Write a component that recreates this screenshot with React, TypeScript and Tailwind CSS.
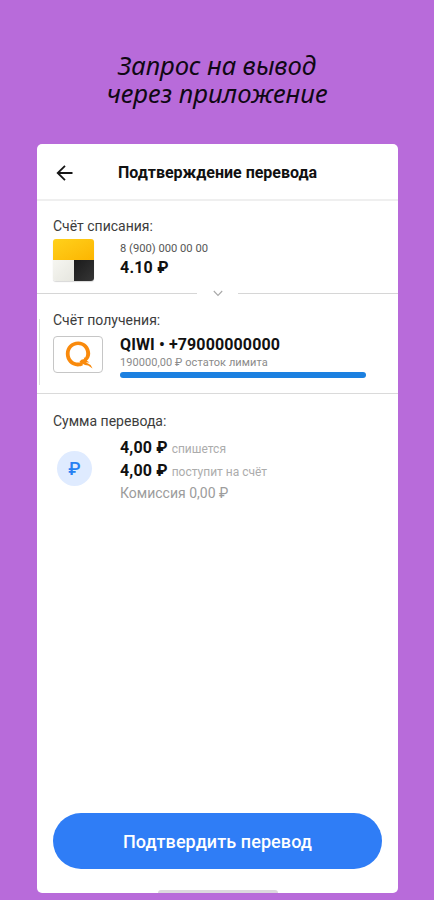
import type { ReactNode } from "react";

const ACCOUNT = {
  phone: "8 (900) 000 00 00",
  balance: "4.10 ₽",
};

const TARGET = {
  title: "QIWI • +79000000000",
  limit: "190000,00 ₽ остаток лимита",
};

const AMOUNTS = [
  { value: "4,00 ₽", note: "спишется" },
  { value: "4,00 ₽", note: "поступит на счёт" },
];

function Label({ children }: { children: ReactNode }) {
  return <p className="text-[14px] leading-4 text-[#3c3c3c] whitespace-nowrap">{children}</p>;
}

function BackIcon() {
  return (
    <svg width="18" height="18" viewBox="0 0 18 18" fill="none" stroke="#161616" strokeWidth="1.8">
      <path d="M16.500 9H2.200M9 1.800L1.700 9L9 16.200" />
    </svg>
  );
}

function YooLogo() {
  return (
    <div className="w-[41px] h-[42px] rounded-[3px] overflow-hidden grid grid-cols-2 grid-rows-2 shadow-[0_1px_1px_#d8d8d8]">
      <div className="col-span-2 bg-linear-to-br from-[#ffd11a] to-[#fcb500]" />
      <div className="bg-linear-to-br from-[#f6f6f1] to-[#e6e6df]" />
      <div className="bg-linear-to-br from-[#1b1b1b] to-[#363636]" />
    </div>
  );
}

function QiwiLogo() {
  return (
    <div className="w-[50px] h-[37px] rounded-[4px] border border-[#c6c6c6]">
      {/* ring with a broken lower right edge and a ragged tail */}
      <svg width="48" height="35" viewBox="0 0 48 35" fill="#f98a0c">
        <path
          fillRule="evenodd"
          d="M24.200 4.500C17.200 4.500 11.800 9.900 11.800 16.800C11.800 23.800 17 29.400 23.800 29.400C25.800 29.400 27.500 29 28.900 28.200L28.600 26.800L31 27.900L34.200 28.600L38.600 31.600L36.600 28L31.800 25.200L35.600 25.600L32.800 23.800C35 21.900 36.200 19.500 36.200 16.600C36.200 9.900 31 4.500 24.200 4.500ZM24 8.100C28.600 8.100 31.900 11.600 32.200 16C32.300 17.700 31.900 19.200 31.200 20.500L29.700 20.700L30.200 22.100L27.300 22.800L25.400 24.800L26.600 25.200C25.800 25.400 25 25.600 24.200 25.600C19.200 25.600 15.600 21.800 15.600 16.700C15.600 11.700 19.200 8.100 24 8.100Z"
        />
      </svg>
    </div>
  );
}

function ArrowDivider() {
  return (
    <div className="h-px flex items-center">
      <div className="h-px w-[160px] bg-[#d6d6d6]" />
      <svg className="mx-auto" width="10" height="7" viewBox="0 0 10 7" fill="none" stroke="#a8a8a8" strokeWidth="1.1">
        <path d="M0.800 1L5 5.400L9.200 1" />
      </svg>
      <div className="h-px w-[160px] bg-[#d6d6d6]" />
    </div>
  );
}

export default function App() {
  return (
    <div className="w-[434px] h-[900px] bg-[#b86bda] font-['Roboto','Liberation_Sans',sans-serif] text-[#111111] overflow-hidden">
      <h1 className="h-[144px] pt-[52px] text-center text-[25.7px] leading-[28px] italic text-[#100814] font-['Noto_Sans','Open_Sans',sans-serif]">
        <span className="block tracking-[-0.15px]">Запрос на вывод</span>
        <span className="block">через приложение</span>
      </h1>

      <main className="ml-[37px] w-[361px] h-[749px] bg-white rounded-[5px] flex flex-col overflow-hidden">
        <header className="h-[57px] pt-[2px] border-b-2 border-[#efefef] flex items-center pl-[19px] shrink-0">
          <BackIcon />
          <h2 className="ml-[44px] pt-[1px] text-[16px] leading-5 font-bold whitespace-nowrap">
            Подтверждение перевода
          </h2>
        </header>

        <section className="h-[92px] pl-4 pt-[17px] shrink-0">
          <Label>Счёт списания:</Label>
          <div className="flex mt-[5px]">
            <YooLogo />
            <div className="ml-[26px]">
              <p className="mt-[4px] text-[11.200px] leading-3 text-[#555555]">{ACCOUNT.phone}</p>
              <p className="mt-[3px] text-[16px] leading-5 font-bold tracking-[0.2px]">{ACCOUNT.balance}</p>
            </div>
          </div>
        </section>

        <ArrowDivider />

        <section className="h-[99px] flex shrink-0">
          <div className="w-[3px] h-[66px] mt-[25px] border-r border-[#dedede]" />
          <div className="pl-[13px] pt-[18px]">
            <Label>Счёт получения:</Label>
            <div className="flex mt-[8px]">
              <QiwiLogo />
              <div className="ml-[17px]">
                <p className="text-[16px] leading-[18px] font-bold tracking-[0.12px] whitespace-nowrap">{TARGET.title}</p>
                <p className="mt-[3px] text-[11px] leading-3 text-[#8a8a8a] tracking-[0.07px] whitespace-nowrap">
                  {TARGET.limit}
                </p>
                <div className="mt-[3px] w-[246px] h-[6px] rounded-full bg-[#1c80e0]" />
              </div>
            </div>
          </div>
        </section>

        <section className="border-t border-[#dadada] pl-4 pt-[19px] grow">
          <Label>Сумма перевода:</Label>
          <div className="flex mt-[8px]">
            <div className="ml-[4px] mt-[14px] size-[35px] rounded-full bg-[#dfebff] flex items-center justify-center text-[18px] font-medium text-[#2680f2]">
              ₽
            </div>
            <div className="ml-[28px] pt-px">
              {AMOUNTS.map((a) => (
                <p key={a.note} className="h-[23px] leading-[20px] whitespace-nowrap">
                  <span className="text-[16px] font-bold tracking-[0.15px]">{a.value}</span>
                  <span className="ml-[4px] text-[12px] text-[#acacac]">{a.note}</span>
                </p>
              ))}
              <p className="-mt-px text-[14px] leading-5 text-[#9c9c9c] whitespace-nowrap">Комиссия 0,00 ₽</p>
            </div>
          </div>
        </section>

        <button className="mx-4 h-[56px] shrink-0 rounded-full bg-[#2f7df6] text-white text-[18px] font-medium tracking-[0.09px]">
          Подтвердить перевод
        </button>
        <div className="mt-[21px] mx-auto w-[120px] h-[3px] rounded-t-full bg-[#dcd8de] shrink-0" />
      </main>
    </div>
  );
}
